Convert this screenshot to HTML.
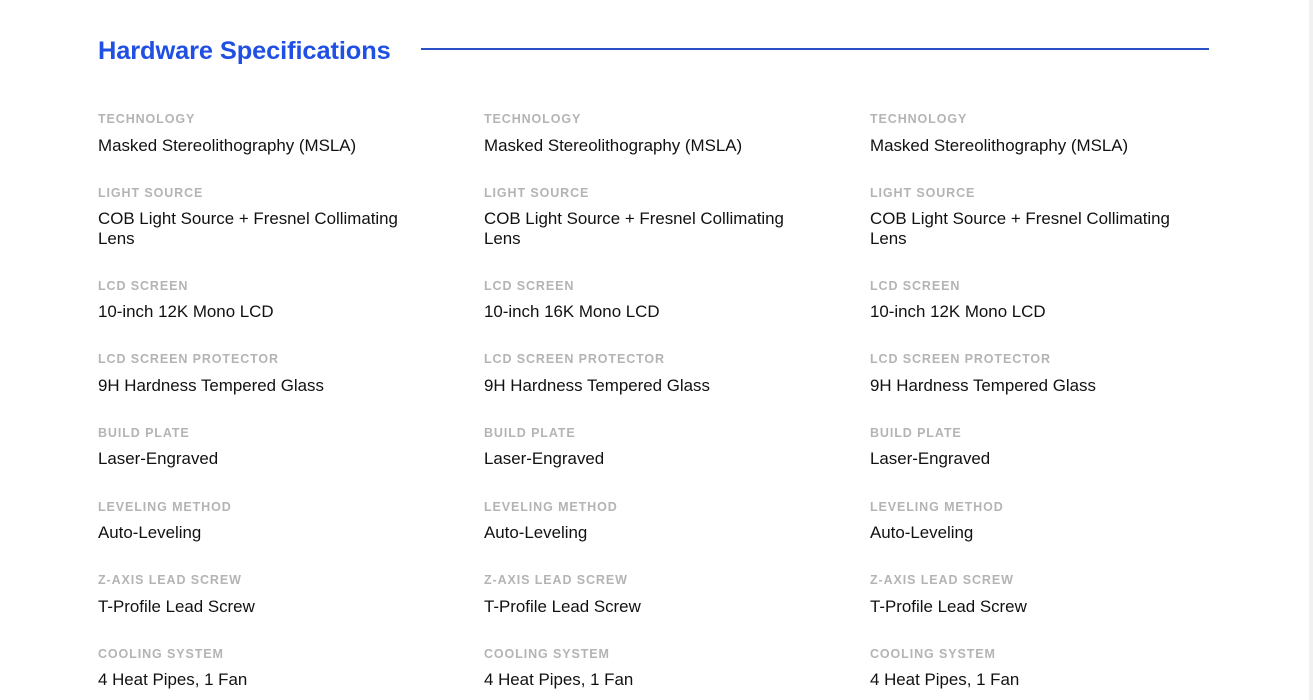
<!DOCTYPE html>
<html><head><meta charset="utf-8"><style>
html,body{margin:0;padding:0;background:#fff;width:1313px;height:700px;overflow:hidden;font-family:"Liberation Sans",sans-serif;}
.sb{position:absolute;left:1309px;top:0;width:4px;height:700px;background:#f1f1f1;}
h1{position:absolute;left:98px;top:35px;margin:0;font-size:25.4px;line-height:32px;font-weight:bold;color:#1f4fe3;letter-spacing:-0.1px;}
.line{position:absolute;left:421px;top:48px;width:788px;height:2px;background:#2a50c6;}
.col{position:absolute;top:0;width:340px;}
.l{position:absolute;font-size:12.5px;line-height:14px;letter-spacing:0.9px;color:#b4b4b4;font-weight:bold;white-space:nowrap;margin-top:1px;}
.v{position:absolute;font-size:16.9px;line-height:20px;color:#111;white-space:nowrap;margin-top:1px;}
</style></head><body>
<div class="sb"></div>
<h1>Hardware Specifications</h1>
<div class="line"></div>
<div class="col" style="left:98px">
<div class="l" style="top:111px">TECHNOLOGY</div><div class="v" style="top:135px">Masked Stereolithography (MSLA)</div>
<div class="l" style="top:185px">LIGHT SOURCE</div><div class="v" style="top:208px">COB Light Source + Fresnel Collimating<br>Lens</div>
<div class="l" style="top:278px">LCD SCREEN</div><div class="v" style="top:301px">10-inch 12K Mono LCD</div>
<div class="l" style="top:351px">LCD SCREEN PROTECTOR</div><div class="v" style="top:375px">9H Hardness Tempered Glass</div>
<div class="l" style="top:425px">BUILD PLATE</div><div class="v" style="top:448px">Laser-Engraved</div>
<div class="l" style="top:499px">LEVELING METHOD</div><div class="v" style="top:522px">Auto-Leveling</div>
<div class="l" style="top:572px">Z-AXIS LEAD SCREW</div><div class="v" style="top:596px">T-Profile Lead Screw</div>
<div class="l" style="top:646px">COOLING SYSTEM</div><div class="v" style="top:669px">4 Heat Pipes, 1 Fan</div>
</div>
<div class="col" style="left:484px">
<div class="l" style="top:111px">TECHNOLOGY</div><div class="v" style="top:135px">Masked Stereolithography (MSLA)</div>
<div class="l" style="top:185px">LIGHT SOURCE</div><div class="v" style="top:208px">COB Light Source + Fresnel Collimating<br>Lens</div>
<div class="l" style="top:278px">LCD SCREEN</div><div class="v" style="top:301px">10-inch 16K Mono LCD</div>
<div class="l" style="top:351px">LCD SCREEN PROTECTOR</div><div class="v" style="top:375px">9H Hardness Tempered Glass</div>
<div class="l" style="top:425px">BUILD PLATE</div><div class="v" style="top:448px">Laser-Engraved</div>
<div class="l" style="top:499px">LEVELING METHOD</div><div class="v" style="top:522px">Auto-Leveling</div>
<div class="l" style="top:572px">Z-AXIS LEAD SCREW</div><div class="v" style="top:596px">T-Profile Lead Screw</div>
<div class="l" style="top:646px">COOLING SYSTEM</div><div class="v" style="top:669px">4 Heat Pipes, 1 Fan</div>
</div>
<div class="col" style="left:870px">
<div class="l" style="top:111px">TECHNOLOGY</div><div class="v" style="top:135px">Masked Stereolithography (MSLA)</div>
<div class="l" style="top:185px">LIGHT SOURCE</div><div class="v" style="top:208px">COB Light Source + Fresnel Collimating<br>Lens</div>
<div class="l" style="top:278px">LCD SCREEN</div><div class="v" style="top:301px">10-inch 12K Mono LCD</div>
<div class="l" style="top:351px">LCD SCREEN PROTECTOR</div><div class="v" style="top:375px">9H Hardness Tempered Glass</div>
<div class="l" style="top:425px">BUILD PLATE</div><div class="v" style="top:448px">Laser-Engraved</div>
<div class="l" style="top:499px">LEVELING METHOD</div><div class="v" style="top:522px">Auto-Leveling</div>
<div class="l" style="top:572px">Z-AXIS LEAD SCREW</div><div class="v" style="top:596px">T-Profile Lead Screw</div>
<div class="l" style="top:646px">COOLING SYSTEM</div><div class="v" style="top:669px">4 Heat Pipes, 1 Fan</div>
</div>
</body></html>
